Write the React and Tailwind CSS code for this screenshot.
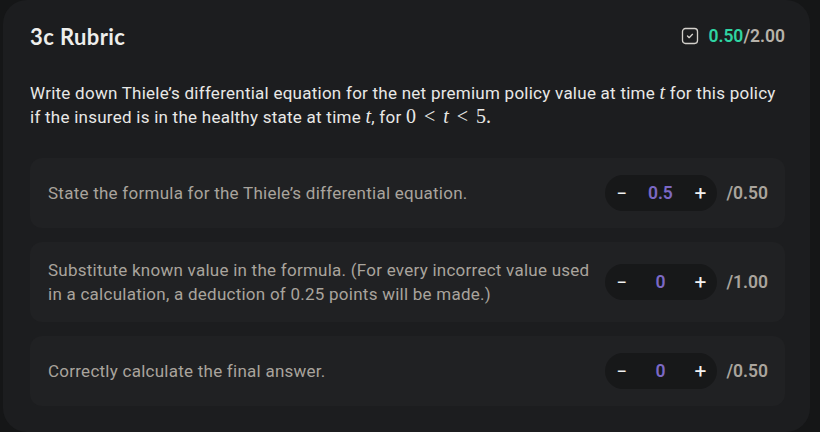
import React from "react";

const items = [
  { text: "State the formula for the Thiele\u2019s differential equation.", value: "0.5", max: "/0.50" },
  {
    text: "Substitute known value in the formula. (For every incorrect value used in a calculation, a deduction of 0.25 points will be made.)",
    value: "0",
    max: "/1.00",
  },
  { text: "Correctly calculate the final answer.", value: "0", max: "/0.50" },
];

function CheckIcon() {
  return (
    <svg width="20" height="20" viewBox="0 0 24 24" fill="none" stroke="#d4d1cc" strokeWidth="1.6" strokeLinecap="round" strokeLinejoin="round">
      <rect x="3" y="3" width="18" height="18" rx="3.5" />
      <path d="m9 12 2 2 4-4" />
    </svg>
  );
}

const serif = { fontFamily: '"Liberation Serif", "DejaVu Serif", serif' };

function M({ children }) {
  return <span className="italic text-[20px]" style={serif}>{children}</span>;
}

export default function App() {
  return (
    <div className="w-[820px] h-[432px] bg-[#151617] overflow-hidden" style={{ fontFamily: 'Roboto, "Liberation Sans", sans-serif' }}>
      <div className="ml-[3px] w-[807px] h-[432px] rounded-[24px] bg-[#1c1d1f] pl-[27px] pr-[25px] pt-[24px]">
        <div className="flex items-center justify-between h-[24px]">
          <div className="text-[22px] tracking-[0.4px] font-bold text-[#eeeeec]" style={{ fontFamily: 'Lato, "Noto Sans", sans-serif' }}>3c Rubric</div>
          <div className="flex items-center gap-[8px] text-[17.5px] font-semibold">
            <CheckIcon />
            <div>
              <span className="text-[#2fd4a2]">0.50</span>
              <span className="text-[#b7b2aa]">/2.00</span>
            </div>
          </div>
        </div>

        <p className="mt-[33px] text-[17px] tracking-[0.25px] leading-[23px] text-[#e8e8e6]">
          Write down Thiele&rsquo;s differential equation for the net premium policy value at time <M>t</M> for this policy
          <br />
          if the insured is in the healthy state at time <M>t</M>, for{" "}
          <span className="text-[20px] tracking-normal" style={serif}>
            0<span className="mx-[8px]">&lt;</span><i>t</i><span className="mx-[8px]">&lt;</span>5.
          </span>
        </p>

        <div className="mt-[29px] flex flex-col gap-[14px]">
          {items.map((it, i) => (
            <div key={i} className="flex items-center min-h-[70px] py-4 pl-[18px] pr-[17px] rounded-[12px] bg-[#202123]">
              <div className="flex-1 pr-[12px] text-[17px] tracking-[0.25px] leading-[24px] text-[#a9a49d]">{it.text}</div>
              <div className="flex items-center h-[36px] w-[112px] rounded-full bg-[#171819] px-[11px]">
                <span className="text-[19px] text-[#f2f2f2] leading-none w-[10px] text-center">&minus;</span>
                <span className="flex-1 text-center text-[17.5px] font-semibold text-[#7b68c4]">{it.value}</span>
                <span className="text-[21px] text-[#f2f2f2] leading-none w-[12px] text-center">+</span>
              </div>
              <div className="ml-[9px] text-[17.5px] font-semibold text-[#a9a49d]">{it.max}</div>
            </div>
          ))}
        </div>
      </div>
    </div>
  );
}
